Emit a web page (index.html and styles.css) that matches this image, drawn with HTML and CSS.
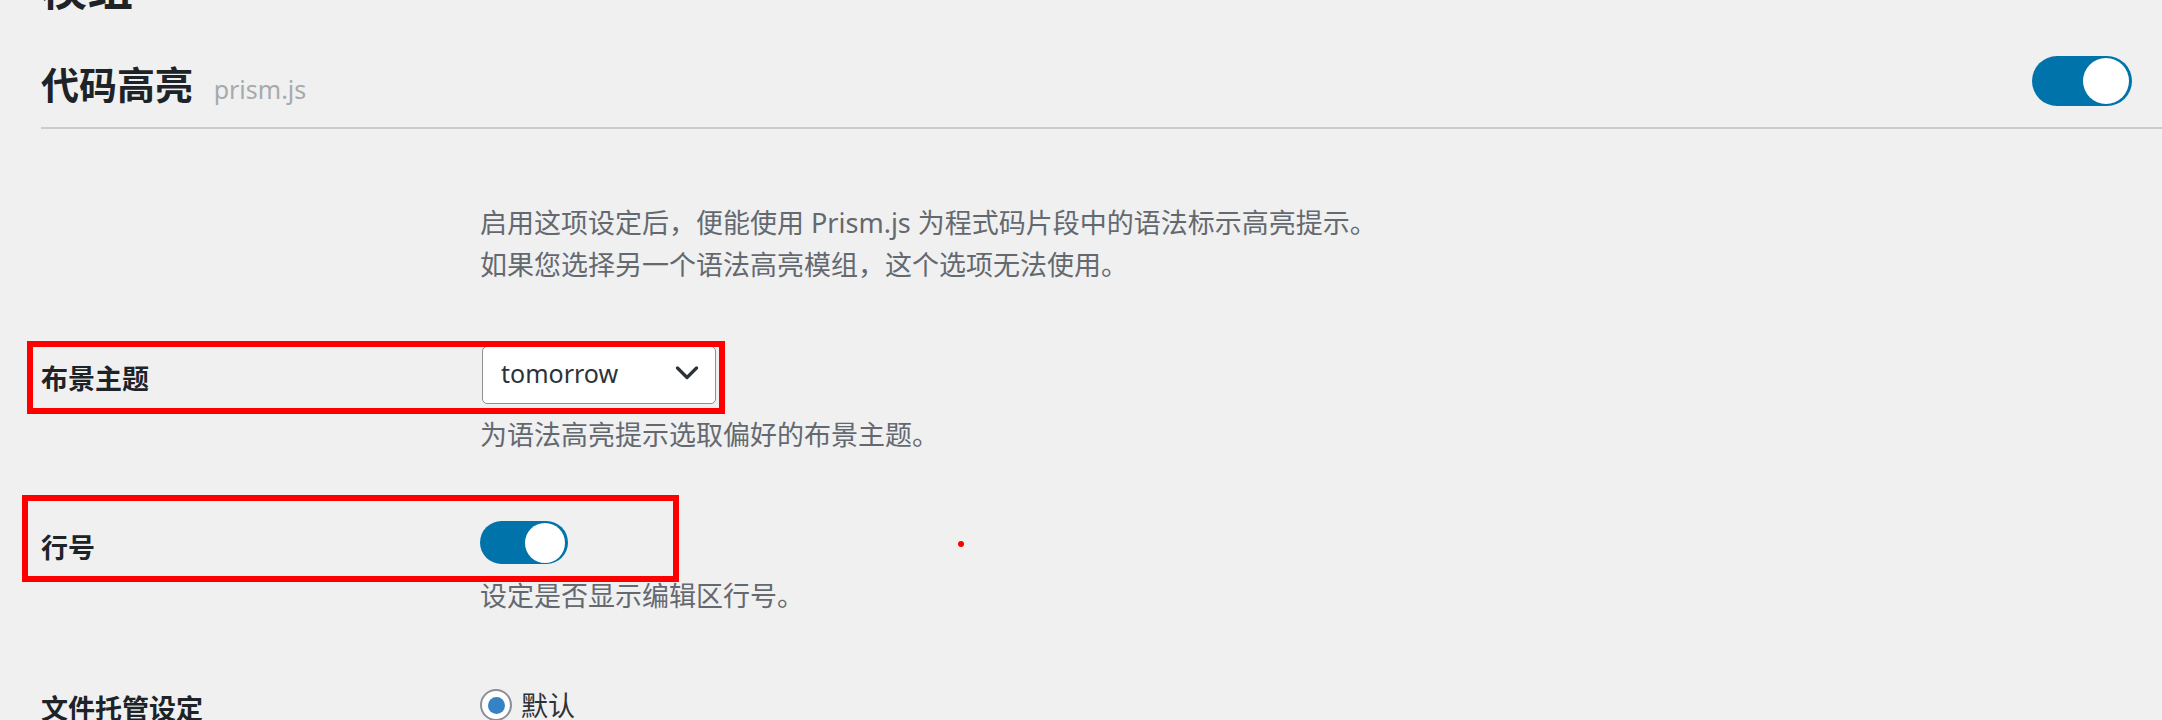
FILE: index.html
```html
<!DOCTYPE html>
<html lang="zh-CN">
<head>
<meta charset="utf-8">
<title>模组 - 代码高亮</title>
<link rel="stylesheet" href="styles.css">
</head>
<body>
<div class="page">
  <h1 class="page-title">模组</h1>

  <div class="module-header">
    <h2 class="module-title">代码高亮 <span class="module-sub">prism.js</span></h2>
    <span class="toggle toggle-lg" role="switch" aria-checked="true"><span class="knob"></span></span>
  </div>

  <div class="module-body">
    <div class="row">
      <div class="row-label"></div>
      <div class="row-field">
        <p class="desc intro">启用这项设定后，便能使用 Prism.js 为程式码片段中的语法标示高亮提示。<br>如果您选择另一个语法高亮模组，这个选项无法使用。</p>
      </div>
    </div>

    <div class="row row-theme">
      <div class="row-label label-theme">布景主题</div>
      <div class="row-field">
        <div class="select">
          <span class="select-value">tomorrow</span>
          <svg class="chevron" width="24" height="14" viewBox="0 0 24 14"><polyline points="2.5,2 12,11.5 21.5,2" fill="none" stroke="#2c3338" stroke-width="3.2" stroke-linecap="round" stroke-linejoin="round"/></svg>
        </div>
        <p class="desc below-select">为语法高亮提示选取偏好的布景主题。</p>
      </div>
    </div>

    <div class="row row-lines">
      <div class="row-label label-lines">行号</div>
      <div class="row-field">
        <span class="toggle toggle-sm" role="switch" aria-checked="true"><span class="knob"></span></span>
        <p class="desc below-toggle">设定是否显示编辑区行号。</p>
      </div>
    </div>

    <div class="row row-host">
      <div class="row-label label-host">文件托管设定</div>
      <div class="row-field">
        <label class="radio"><span class="radio-dot"></span><span class="radio-text">默认</span></label>
      </div>
    </div>
  </div>

  <div class="mark mark-theme"></div>
  <div class="mark mark-lines"></div>
  <div class="dot"></div>
</div>
</body>
</html>
```

FILE: styles.css
```css
html, body {
  margin: 0;
  padding: 0;
  background: #f0f0f1;
  height: 720px;
  overflow: hidden;
}

body {
  font-family: "Noto Sans", "Noto Sans CJK SC", sans-serif;
  color: #1d2327;
}

.page {
  position: relative;
  display: flow-root;
  padding-left: 41px;
}

.page-title {
  margin: -38px 0 0;
  font-family: "Noto Sans CJK SC", sans-serif;
  font-size: 46px;
  line-height: 46px;
  font-weight: 700;
  color: #1d2327;
}

.module-header {
  margin-top: 48px;
  display: flex;
  align-items: flex-start;
  justify-content: space-between;
  padding-right: 30px;
  padding-bottom: 21px;
  border-bottom: 2px solid #cccccc;
}

.module-title {
  margin: 0;
  padding-top: 5px;
  font-family: "Noto Sans CJK SC", sans-serif;
  font-size: 38px;
  line-height: 44px;
  font-weight: 700;
  color: #1d2327;
}

.module-sub {
  margin-left: 12px;
  font-family: "Noto Sans", sans-serif;
  font-size: 25px;
  line-height: 1;
  font-weight: 400;
  color: #a7aaad;
}

.toggle {
  display: inline-flex;
  align-items: center;
  justify-content: flex-end;
  background: #0073aa;
  box-sizing: border-box;
}

.toggle .knob {
  display: block;
  background: #ffffff;
  border-radius: 50%;
}

.toggle-lg {
  width: 100px;
  height: 50px;
  border-radius: 25px;
  padding: 2px 3px;
}

.toggle-lg .knob {
  width: 46px;
  height: 46px;
}

.toggle-sm {
  width: 88px;
  height: 43px;
  border-radius: 22px;
  padding: 2px 3px;
}

.toggle-sm .knob {
  width: 40px;
  height: 40px;
}

.module-body {
  display: flex;
  flex-direction: column;
}

.row {
  display: flex;
}

.row-label {
  width: 439px;
  flex: none;
  font-family: "Noto Sans CJK SC", sans-serif;
  font-size: 27px;
  line-height: 36px;
  font-weight: 700;
  color: #1d2327;
}

.row-field {
  display: flex;
  flex-direction: column;
  align-items: flex-start;
}

.desc {
  margin: 0;
  font-family: "Noto Sans", "Noto Sans CJK SC", sans-serif;
  font-size: 27px;
  line-height: 42px;
  color: #646970;
}

.intro {
  margin-top: 73px;
}

.below-select {
  margin-top: 10px;
}

.below-toggle {
  margin-top: 11px;
}

.row-theme {
  margin-top: 60px;
}

.label-theme {
  padding-top: 14px;
}

.select {
  margin-left: 2px;
  width: 234px;
  height: 58px;
  box-sizing: border-box;
  border: 1px solid #8c8f94;
  border-radius: 5px;
  background: #ffffff;
  display: flex;
  align-items: center;
  justify-content: space-between;
  padding: 0 16px 0 18px;
}

.select-value {
  font-family: "Noto Sans", sans-serif;
  font-size: 25px;
  color: #2c3338;
  line-height: 1;
  padding-bottom: 3px;
}

.chevron {
  display: block;
  margin-top: -4px;
}

.row-lines {
  margin-top: 65px;
}

.label-lines {
  padding-top: 8px;
}

.row-host {
  margin-top: 70px;
}

.label-host {
  padding-top: 3px;
}

.radio {
  display: flex;
  align-items: center;
  gap: 9px;
  font-family: "Noto Sans CJK SC", sans-serif;
  font-size: 27px;
  line-height: 36px;
  color: #2c3338;
}

.radio-dot {
  width: 32px;
  height: 32px;
  box-sizing: border-box;
  border: 2px solid #8c8f94;
  border-radius: 50%;
  background: #ffffff;
  display: flex;
  align-items: center;
  justify-content: center;
}

.radio-dot::after {
  content: "";
  width: 17px;
  height: 17px;
  border-radius: 50%;
  background: #3582c4;
}

.mark {
  position: absolute;
  box-sizing: border-box;
  border: 6px solid #ff0000;
}

.mark-theme {
  left: 27px;
  top: 341px;
  width: 698px;
  height: 73px;
}

.mark-lines {
  left: 22px;
  top: 495px;
  width: 657px;
  height: 87px;
}

.dot {
  position: absolute;
  left: 958px;
  top: 541px;
  width: 6px;
  height: 6px;
  border-radius: 50%;
  background: #ff0000;
}
```
